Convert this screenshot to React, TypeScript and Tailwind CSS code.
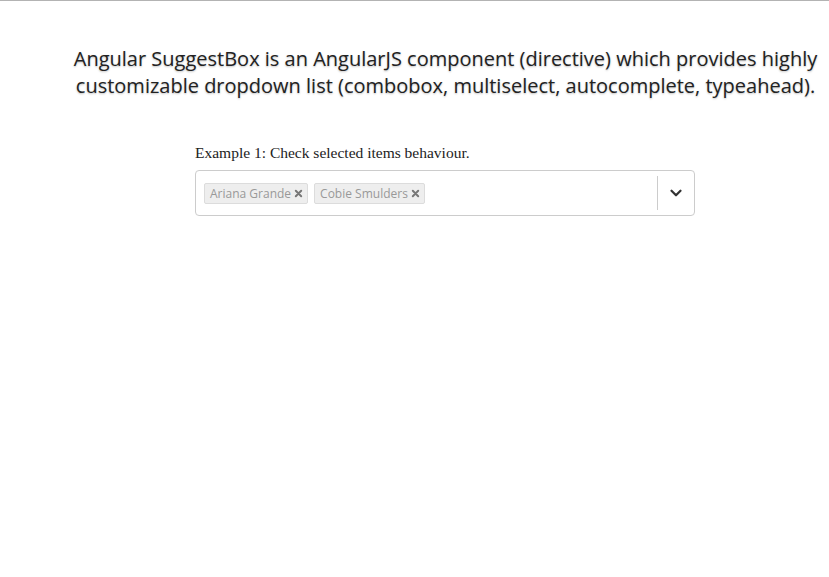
import { ChevronDown } from 'lucide-react'

const tags = ['Ariana Grande', 'Cobie Smulders']

function Tag({ label }: { label: string }) {
  return (
    <span className="flex h-[21px] items-center gap-[3px] rounded-[2px] border border-[#dcdcdc] bg-[#eeeeee] pl-[5px] pr-[4px] text-[12px] text-[#999]">
      {label}
      <svg viewBox="0 0 10 10" className="h-[9px] w-[9px]">
        <path d="M2 2 L8 8 M8 2 L2 8" stroke="#777" strokeWidth="2.2" strokeLinecap="round" />
      </svg>
    </span>
  )
}

export default function App() {
  return (
    <div className="min-h-[577px] border-t border-[#b3b3b3] bg-white" style={{ fontFamily: '"Open Sans", sans-serif' }}>
      <p className="pt-[44px] pl-[62px] text-center text-[20px] leading-[27px] text-[#222] [text-shadow:0_1px_2px_rgba(0,0,0,0.25)]">
        Angular SuggestBox is an AngularJS component (directive) which provides highly
        <br />
        customizable dropdown list (combobox, multiselect, autocomplete, typeahead).
      </p>
      <div className="ml-[195px] mt-[44px] w-[500px]">
        <label className="block text-[15.5px] leading-[20px] text-[#222]" style={{ fontFamily: '"Liberation Serif", serif' }}>
          Example 1: Check selected items behaviour.
        </label>
        <div className="mt-[7px] flex h-[46px] items-center rounded-[4px] border border-[#cccccc]">
          <div className="flex flex-1 gap-[6px] pl-[8px] pt-[1px]">
            {tags.map((t) => (
              <Tag key={t} label={t} />
            ))}
          </div>
          <div className="h-[34px] w-px bg-[#ccc]" />
          <div className="flex w-[36px] items-center justify-center">
            <ChevronDown size={18} strokeWidth={3} color="#333" />
          </div>
        </div>
      </div>
    </div>
  )
}
